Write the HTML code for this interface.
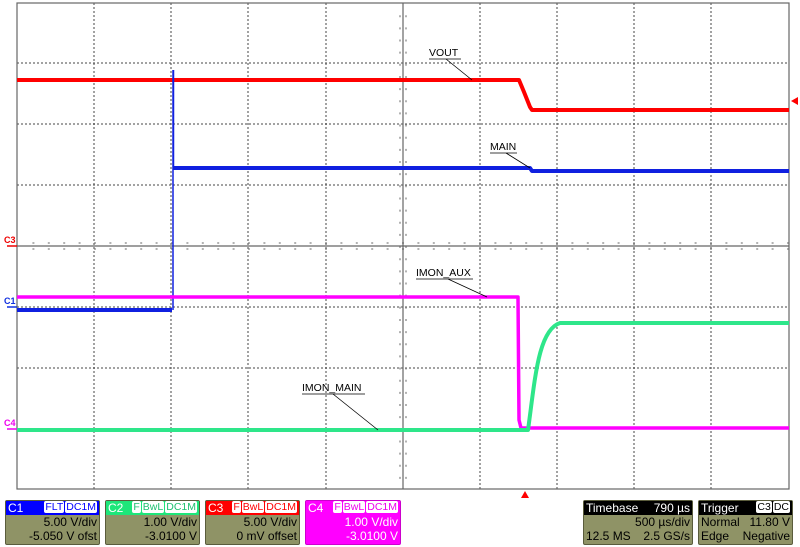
<!DOCTYPE html>
<html><head><meta charset="utf-8"><style>
body{margin:0;width:800px;height:547px;background:#fff;overflow:hidden;font-family:"Liberation Sans",sans-serif;position:relative}
.box{position:absolute;top:500px;height:45px;background:#8f9366;border:1px solid #5a5c3c;border-radius:2px;font-size:12px;color:#000;box-sizing:border-box}
.hd{height:14px;line-height:14px;padding-left:2px;color:#fff;position:relative}
.tag{position:absolute;right:2px;top:1px;font-size:10.5px;line-height:11px}
.tag span{background:#fff;padding:0 1px;margin-left:1px;border-radius:2px}
.r{text-align:right;padding-right:2px;line-height:15px}
</style></head><body>
<svg width="800" height="547" style="position:absolute;left:0;top:0">
<g stroke="#444" stroke-width="1" stroke-dasharray="2,2">
<line x1="94" y1="3" x2="94" y2="489"/><line x1="171" y1="3" x2="171" y2="489"/><line x1="248" y1="3" x2="248" y2="489"/><line x1="326" y1="3" x2="326" y2="489"/><line x1="480" y1="3" x2="480" y2="489"/><line x1="557" y1="3" x2="557" y2="489"/><line x1="634" y1="3" x2="634" y2="489"/><line x1="711" y1="3" x2="711" y2="489"/>
<line x1="17" y1="63" x2="789" y2="63"/><line x1="17" y1="124" x2="789" y2="124"/><line x1="17" y1="185" x2="789" y2="185"/><line x1="17" y1="307" x2="789" y2="307"/><line x1="17" y1="368" x2="789" y2="368"/><line x1="17" y1="429" x2="789" y2="429"/>
</g>
<g stroke="#666" stroke-width="1.2" fill="none">
<rect x="17" y="3" width="772" height="486"/>
<line x1="403" y1="3" x2="403" y2="489"/><line x1="17" y1="246" x2="789" y2="246"/>
</g>
<g stroke="#666" stroke-width="1" stroke-dasharray="2,13.4">
<line x1="32.4" y1="243" x2="789" y2="243"/><line x1="32.4" y1="249" x2="789" y2="249" stroke-dashoffset="0"/>
<line x1="400" y1="15.2" x2="400" y2="489" stroke-dasharray="2,10.15"/><line x1="406" y1="15.2" x2="406" y2="489" stroke-dasharray="2,10.15"/>
</g>
<!-- traces -->
<g fill="none" stroke-linejoin="round">
<path d="M17 80 H519 L524 92 L530 107 L532 110 H789" stroke="#f00" stroke-width="4"/>
<path d="M17 310 H172 M174 168 H530 L532 171 H789" stroke="#1020e0" stroke-width="4"/>
<path d="M173 310 V70 M173.5 70 V170" stroke="#1020e0" stroke-width="1.5"/>
<path d="M17 297 H518 L519 420 L521 428 H789" stroke="#f0f" stroke-width="3.5"/>
<path d="M17 430 H528 C535 380 538 330 560 323 H789" stroke="#2ee68a" stroke-width="4"/>
</g>
<!-- labels -->
<g font-family="Liberation Sans, sans-serif" font-size="10.5" fill="#000">
<text x="429" y="56">VOUT</text><path d="M429 59 H461 M446 59 L472 80" stroke="#000" stroke-width="0.8"/>
<text x="490" y="150">MAIN</text><path d="M490 153 H517 M506 153 L530 168" stroke="#000" stroke-width="0.8"/>
<text x="416" y="276">IMON_AUX</text><path d="M416 279 H473 M448 279 L487 297" stroke="#000" stroke-width="0.8"/>
<text x="302" y="391">IMON_MAIN</text><path d="M302 394 H365 M333 394 L378 430" stroke="#000" stroke-width="0.8"/>
</g>
<g font-family="Liberation Sans, sans-serif" font-size="9" font-weight="bold">
<text x="4" y="243" fill="#e00">C3</text><path d="M7 246 H17" stroke="#e00" stroke-width="1.5"/>
<text x="4" y="304" fill="#1030e0">C1</text><path d="M7 307 H17" stroke="#1030e0" stroke-width="1.5"/>
<text x="4" y="426" fill="#e0e">C4</text><path d="M7 429 H17" stroke="#e0e" stroke-width="1.5"/>
</g>
<path d="M791 101 L798 97 L798 105 Z" fill="#f00"/>
<path d="M525 491 L521 498 L529 498 Z" fill="#f00"/>
</svg>
<div class="box" style="left:5px;width:95px"><div class="hd" style="background:#0000ff">C1<div class="tag" style="color:#0000ff"><span>FLT</span><span>DC1M</span></div></div><div class="r">5.00 V/div</div><div class="r" style="line-height:13px">-5.050 V ofst</div></div>
<div class="box" style="left:105px;width:95px"><div class="hd" style="background:#1ee67a">C2<div class="tag" style="color:#1ec070"><span>F</span><span>BwL</span><span>DC1M</span></div></div><div class="r">1.00 V/div</div><div class="r" style="line-height:13px">-3.0100 V</div></div>
<div class="box" style="left:205px;width:95px"><div class="hd" style="background:#f00">C3<div class="tag" style="color:#f00"><span>F</span><span>BwL</span><span>DC1M</span></div></div><div class="r">5.00 V/div</div><div class="r" style="line-height:13px">0 mV offset</div></div>
<div class="box" style="left:305px;width:96px;background:#f0f;color:#fff;border-color:#c0c"><div class="hd" style="background:#f0f">C4<div class="tag" style="color:#e0e"><span>F</span><span>BwL</span><span>DC1M</span></div></div><div class="r">1.00 V/div</div><div class="r" style="line-height:13px">-3.0100 V</div></div>
<div class="box" style="left:583px;width:110px"><div class="hd" style="background:#000;display:flex;justify-content:space-between;padding-right:2px">Timebase<span>790 µs</span></div><div class="r">500 µs/div</div><div style="display:flex;justify-content:space-between;padding:0 2px;line-height:13px"><span>12.5 MS</span><span>2.5 GS/s</span></div></div>
<div class="box" style="left:698px;width:95px"><div class="hd" style="background:#000">Trigger<div class="tag" style="color:#000"><span>C3</span><span>DC</span></div></div><div style="display:flex;justify-content:space-between;padding:0 2px;line-height:15px"><span>Normal</span><span>11.80 V</span></div><div style="display:flex;justify-content:space-between;padding:0 2px;line-height:13px"><span>Edge</span><span>Negative</span></div></div>
</body></html>
